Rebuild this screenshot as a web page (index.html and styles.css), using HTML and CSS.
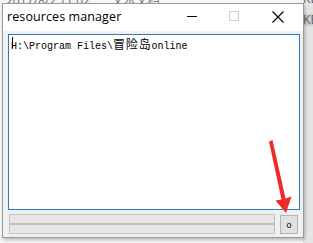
FILE: index.html
```html
<!DOCTYPE html>
<html>
<head>
<meta charset="utf-8">
<link rel="stylesheet" href="styles.css">
</head>
<body>
<div class="desktop">
  <div class="bg-top"><span class="bg-text">2017/8/2 11:02 &nbsp; &nbsp; &nbsp; 文本文档</span></div>
  <div class="bg-right"><span class="k1">KE</span><span class="k2">KE</span></div>
  <div class="window">
    <div class="titlebar">
      <span class="title">resources manager</span>
      <div class="controls">
        <span class="ctl min"><i></i></span>
        <span class="ctl max"><i></i></span>
        <span class="ctl close">
          <svg width="12" height="12" viewBox="0 0 12 12"><path d="M0.5 0.5L11.5 11.5M11.5 0.5L0.5 11.5" stroke="#000" stroke-width="1.1" fill="none"/></svg>
        </span>
      </div>
    </div>
    <div class="client">
      <div class="textbox"><span class="caret"></span>H:\Program Files\<span class="cjk">冒险岛</span>online</div>
      <div class="bottom">
        <div class="progress"><div class="line"></div></div>
        <div class="btn">o</div>
      </div>
    </div>
  </div>
  <svg class="arrow" width="313" height="243" viewBox="0 0 313 243">
    <path d="M269 141.5 L272.5 140 L285.5 198.5 L291.5 196.5 L286 213 L275.5 200.5 L281.5 199.5 Z" fill="#ee2a2a"/>
  </svg>
</div>
</body>
</html>
```
FILE: styles.css
```css
* { box-sizing: border-box; }
html, body { margin: 0; padding: 0; }
body { width: 313px; height: 243px; overflow: hidden; background: #f4f4f4; }
.desktop { position: relative; width: 313px; height: 243px; background: #f6f6f6; overflow: hidden; }
.bg-top { height: 3px; width: 303px; overflow: hidden; position: relative; }
.bg-text {
  position: absolute; left: 6px; top: -9px;
  font: 12px "Noto Sans", "Noto Sans CJK SC", sans-serif; color: #777;
  white-space: nowrap;
}
.bg-right {
  position: absolute; left: 303px; top: 0; width: 10px; height: 243px;
  background: #e4e4e4; overflow: hidden;
  font: 12px "Noto Sans", sans-serif; color: #666; line-height: 14px;
}
.bg-right span { position: absolute; left: 0; }
.bg-right .k1 { top: -8px; }
.bg-right .k2 { top: 14px; height: 12px; line-height: 12px; background: #cfcfcf; }
.window {
  position: absolute; left: 2px; top: 3px; width: 302px; height: 235px;
  border: 1px solid #9a9a9a; background: #f0f0f0;
  box-shadow: 1px 2px 3px rgba(0,0,0,0.25);
  display: flex; flex-direction: column;
}
.titlebar {
  height: 27px; background: #fff; display: flex; align-items: center;
  justify-content: space-between; flex: none;
}
.title {
  font: 12.5px "Open Sans", "Noto Sans", sans-serif; color: #000;
  padding-left: 4px; margin-top: -2px; letter-spacing: 0.1px;
}
.controls { display: flex; height: 100%; }
.ctl { width: 45px; height: 100%; display: flex; align-items: center; justify-content: center; }
.ctl.min i { display: block; width: 10px; height: 1px; background: #000; margin-top: -2px; margin-left: 2px; }
.ctl.max i { display: block; width: 10px; height: 10px; border: 1px solid #cfcfcf; margin-top: -3px; margin-left: -4px; }
.ctl.close svg { margin-top: -2px; margin-left: -6px; }
.client { flex: 1; display: flex; flex-direction: column; padding: 3px 4px 4px 5px; }
.textbox {
  height: 176px; width: 292px; background: #fff; border: 1px solid #2f7bbf;
  font: 10px "Liberation Mono", monospace; color: #000;
  padding: 0 0 0 2px; line-height: 13px; white-space: nowrap; position: relative;
}
.cjk { font: 12px "Noto Sans CJK SC", sans-serif; letter-spacing: 0.8px; }
.caret { position: absolute; left: 3px; top: 2px; width: 1px; height: 11px; background: #000; }
.bottom { display: flex; align-items: flex-start; margin-top: 4px; }
.progress {
  width: 266px; height: 20px; margin-left: 1px; border: 1px solid #c4c4c4; background: #e6e6e6;
  display: flex; align-items: center;
}
.line { width: 100%; height: 2px; background: #c2bdb8; }
.btn {
  width: 18px; height: 19px; margin-left: 5px; margin-top: 1px;
  background: #e1e1e1; border: 1px solid #b4b4b4;
  font: 9px "Liberation Sans", sans-serif; color: #000;
  display: flex; align-items: center; justify-content: center;
}
.arrow { position: absolute; left: 0; top: 0; pointer-events: none; }
```
